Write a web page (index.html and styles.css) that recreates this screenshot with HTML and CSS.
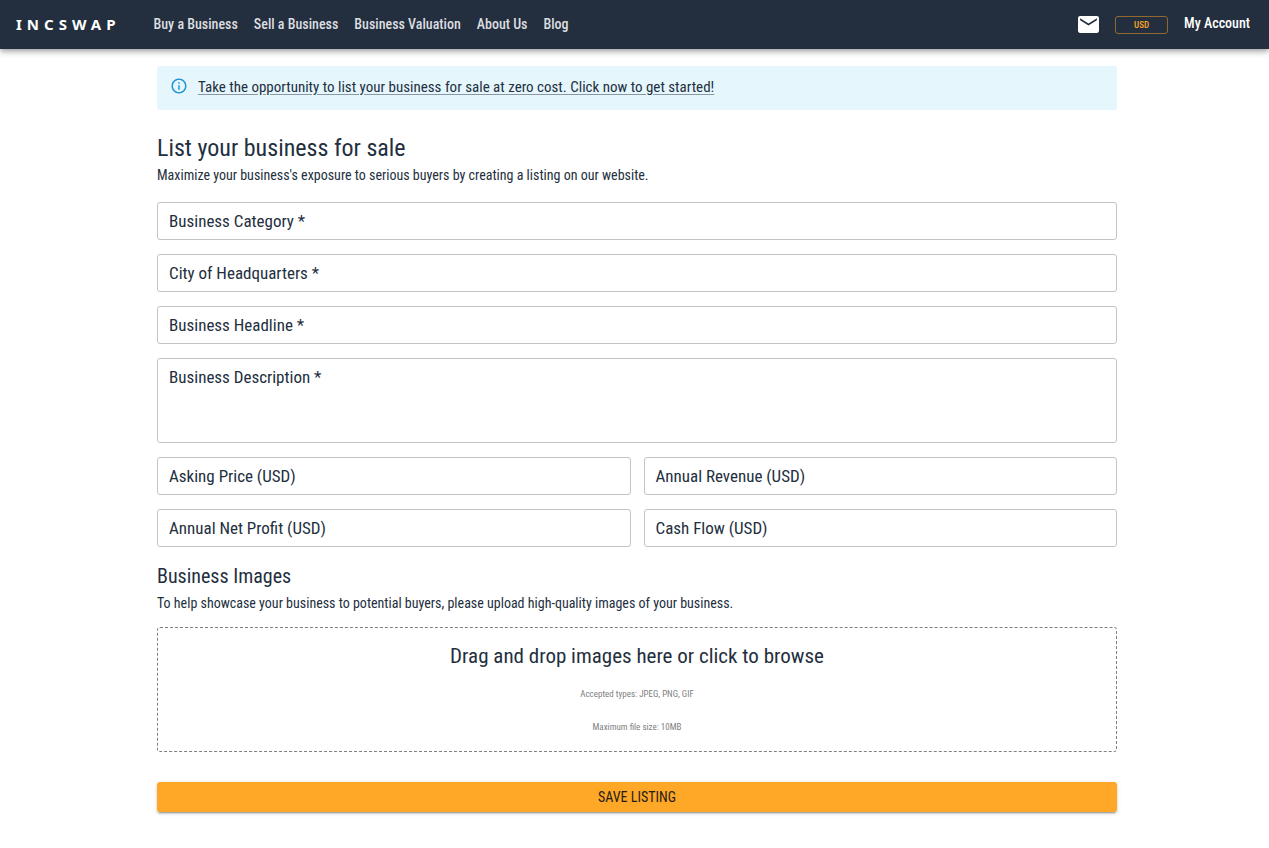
FILE: index.html
```html
<!DOCTYPE html>
<html lang="en">
<head>
<meta charset="utf-8">
<meta name="viewport" content="width=device-width, initial-scale=1">
<title>List your business for sale</title>
<link rel="stylesheet" href="styles.css">
</head>
<body>
<header class="topbar">
  <a class="logo" href="#">INCSWAP</a>
  <nav class="nav">
    <a href="#">Buy a Business</a>
    <a href="#">Sell a Business</a>
    <a href="#">Business Valuation</a>
    <a href="#">About Us</a>
    <a href="#">Blog</a>
  </nav>
  <div class="tools">
    <button class="mail" type="button" aria-label="Messages">
      <svg viewBox="2 4 20 16" width="21" height="17" aria-hidden="true"><path fill="currentColor" d="M20 4H4c-1.1 0-1.99.9-1.99 2L2 18c0 1.100.9 2 2 2h16c1.100 0 2-.9 2-2V6c0-1.100-.9-2-2-2zm0 4l-8 5-8-5V6l8 5 8-5v2z"/></svg>
    </button>
    <button class="currency" type="button">USD</button>
    <a class="account" href="#">My Account</a>
  </div>
</header>
<main class="page">
  <div class="notice">
    <svg class="notice-icon" viewBox="0 0 24 24" width="18" height="18" aria-hidden="true"><path fill="currentColor" d="M11 7h2v2h-2zm0 4h2v6h-2zm1-9C6.480 2 2 6.480 2 12s4.480 10 10 10 10-4.480 10-10S17.520 2 12 2zm0 18c-4.410 0-8-3.590-8-8s3.590-8 8-8 8 3.590 8 8-3.590 8-8 8z"/></svg>
    <a href="#">Take the opportunity to list your business for sale at zero cost. Click now to get started!</a>
  </div>
  <h1 class="title">List your business for sale</h1>
  <p class="lead">Maximize your business's exposure to serious buyers by creating a listing on our website.</p>
  <form class="form">
    <div class="fields">
      <div class="field wide"><input id="category" type="text"><label for="category">Business Category *</label></div>
      <div class="field wide"><input id="city" type="text"><label for="city">City of Headquarters *</label></div>
      <div class="field wide"><input id="headline" type="text"><label for="headline">Business Headline *</label></div>
      <div class="field wide"><textarea id="description"></textarea><label for="description">Business Description *</label></div>
      <div class="field"><input id="price" type="text"><label for="price">Asking Price (USD)</label></div>
      <div class="field"><input id="revenue" type="text"><label for="revenue">Annual Revenue (USD)</label></div>
      <div class="field"><input id="profit" type="text"><label for="profit">Annual Net Profit (USD)</label></div>
      <div class="field"><input id="cash" type="text"><label for="cash">Cash Flow (USD)</label></div>
    </div>
    <h2 class="subtitle">Business Images</h2>
    <p class="lead">To help showcase your business to potential buyers, please upload high-quality images of your business.</p>
    <button class="dropzone" type="button">
      <span class="drop-title">Drag and drop images here or click to browse</span>
      <span class="drop-note">Accepted types: JPEG, PNG, GIF</span>
      <span class="drop-note">Maximum file size: 10MB</span>
    </button>
    <button class="save" type="submit">SAVE LISTING</button>
  </form>
</main>
</body>
</html>
```
FILE: styles.css
```css
* { box-sizing: border-box; }
body {
  margin: 0;
  background: #fff;
  color: #232f3e;
  font-family: "Roboto Condensed", "Liberation Sans Narrow", Roboto, sans-serif;
  font-size: 14px;
  line-height: 20px;
}
button, input, textarea { font: inherit; color: inherit; }
button { cursor: pointer; }
h1, h2, p { margin: 0; font-weight: 400; }

.topbar {
  display: flex;
  align-items: center;
  min-height: 49px;
  padding: 0 19px 0 16px;
  background: #232f3e;
  box-shadow: 0 2px 4px -1px rgba(0,0,0,.2), 0 4px 5px rgba(0,0,0,.14), 0 1px 10px rgba(0,0,0,.12);
}
.topbar a { color: #fff; text-decoration: none; }
.logo {
  padding-bottom: 2px;
  font-family: "Noto Sans", sans-serif;
  font-size: 15px;
  font-weight: 700;
  letter-spacing: 5px;
}
.nav { display: flex; gap: 16px; margin: 0 0 2px 33px; font-weight: 500; }
.topbar .nav a { color: #dcdee0; }
.tools { display: flex; align-items: center; gap: 16px; margin-left: auto; }
.mail { display: flex; padding: 0; border: 0; background: none; color: #fff; }
.currency {
  width: 53px;
  height: 18px;
  padding: 0;
  border: 1px solid #91692f;
  border-radius: 3px;
  background: none;
  color: #ffa726;
  font-size: 9px;
  font-weight: 500;
  line-height: 16px;
}
.account { padding-bottom: 3px; font-weight: 500; }

.page { max-width: 965px; margin: 0 auto; padding: 17px 0 36px 5px; }
.notice {
  display: flex;
  align-items: center;
  gap: 10px;
  min-height: 44px;
  padding: 0 13px;
  border-radius: 3px;
  background: #e5f6fd;
}
.notice-icon { flex: none; margin-bottom: 4px; color: #1e96d8; }
.notice a { padding-bottom: 2px; color: inherit; font-size: 15px; text-decoration-color: #8a98a5; text-underline-offset: 2px; }
.title { margin-top: 22px; font-size: 24px; line-height: 32px; }
.lead { margin-top: 1px; }

.fields { display: grid; grid-template-columns: 1fr 1fr; gap: 14px 13px; margin-top: 17px; }
.field { position: relative; }
.wide { grid-column: 1 / -1; }
.field input, .field textarea {
  display: block;
  width: 100%;
  height: 38px;
  padding: 8px 11px;
  border: 1px solid #c4c4c4;
  border-radius: 3px;
  background: #fff;
  font-size: 17px;
}
.field textarea { height: 85px; resize: none; }
.field label { position: absolute; top: 9px; left: 12px; font-size: 17px; line-height: 20px; pointer-events: none; }
.field input:focus + label, .field textarea:focus + label { color: #ffa726; }

.subtitle { margin-top: 16px; font-size: 20px; line-height: 26px; }
.subtitle + .lead { margin-top: 4px; }
.dropzone {
  display: flex;
  flex-direction: column;
  align-items: center;
  width: 100%;
  margin-top: 14px;
  padding: 14px 16px 14px;
  border: 1px dashed #808080;
  border-radius: 3px;
  background: #fff;
}
.drop-title { margin-bottom: 14px; font-size: 21px; line-height: 28px; }
.drop-note { color: #808080; font-size: 9px; line-height: 20px; }
.drop-note + .drop-note { margin-top: 13px; }
.save {
  display: block;
  width: 100%;
  height: 30px;
  margin-top: 30px;
  padding: 0;
  border: 0;
  border-radius: 3px;
  background: #ffa726;
  color: #232019;
  box-shadow: 0 3px 1px -2px rgba(0,0,0,.2), 0 2px 2px rgba(0,0,0,.14), 0 1px 5px rgba(0,0,0,.12);
}
```
